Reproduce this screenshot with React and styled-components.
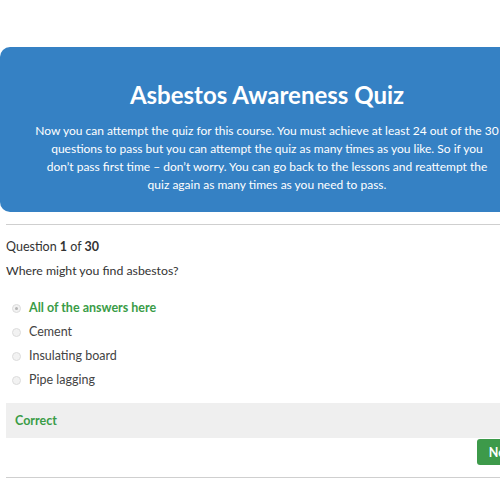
import React from "react";
import styled, { createGlobalStyle } from "styled-components";

const Global = createGlobalStyle`
  html, body { margin: 0; padding: 0; overflow: hidden; background: #fff; }
  body { font-family: Lato, "Open Sans", sans-serif; color: #333; }
`;

const Page = styled.div`
  width: 534px;
  padding-top: 47px;
`;

const Hero = styled.header`
  background: #3581c4;
  border-radius: 10px;
  color: #fff;
  text-align: center;
  padding: 34px 0 20px;
  height: 165px;
  box-sizing: border-box;
`;

const Title = styled.h1`
  margin: 0 0 13px;
  font-size: 24px;
  font-weight: 700;
  line-height: 28px;
`;

const Intro = styled.p`
  margin: 0;
  font-size: 12px;
  line-height: 18px;
  white-space: nowrap;
`;

const Content = styled.main`
  padding: 12px 6px 0 6px;
`;

const Rule = styled.hr`
  border: 0;
  border-top: 1px solid #cfcfcf;
  margin: 0;
`;

const Counter = styled.div`
  margin-top: 13px;
  font-size: 12.5px;
  line-height: 18px;
  b { font-weight: 700; }
`;

const Prompt = styled.div`
  margin-top: 6px;
  font-size: 12.3px;
  line-height: 18px;
`;

const Options = styled.ul`
  list-style: none;
  margin: 19px 0 0;
  padding: 0 0 0 6px;
  display: flex;
  flex-direction: column;
  gap: 6px;
`;

const Option = styled.li`
  display: flex;
  align-items: center;
  gap: 8px;
  font-size: 12.5px;
  line-height: 18px;
  color: ${(p) => (p.$correct ? "#3a9c47" : "#444")};
  font-weight: ${(p) => (p.$correct ? 700 : 400)};
`;

const Radio = styled.span`
  width: 7px;
  height: 7px;
  border-radius: 50%;
  border: 1px solid #dcdcdc;
  background: #f2f2f2;
  display: inline-flex;
  align-items: center;
  justify-content: center;
  flex: none;
  &::after {
    content: "";
    width: 3px;
    height: 3px;
    border-radius: 50%;
    background: ${(p) => (p.$checked ? "#b5b5b5" : "transparent")};
  }
`;

const Feedback = styled.div`
  margin-top: 14px;
  background: #efefef;
  height: 35px;
  display: flex;
  align-items: center;
  padding-left: 9px;
  font-size: 12.5px;
  font-weight: 700;
  color: #3a9c47;
`;

const Actions = styled.div`
  display: flex;
  justify-content: flex-end;
  padding-top: 1px;
  padding-bottom: 12px;
  border-bottom: 1px solid #cfcfcf;
`;

const NextButton = styled.button`
  background: #3d9a4a;
  color: #fff;
  border: 0;
  border-radius: 3px;
  height: 26px;
  padding: 0 12px;
  font-family: inherit;
  font-size: 12.5px;
  font-weight: 700;
`;

const answers = [
  { label: "All of the answers here", correct: true },
  { label: "Cement" },
  { label: "Insulating board" },
  { label: "Pipe lagging" },
];

export default function App() {
  return (
    <>
      <Global />
      <Page>
        <Hero>
          <Title>Asbestos Awareness Quiz</Title>
          <Intro>
            Now you can attempt the quiz for this course. You must achieve at least 24 out of the 30
            <br />
            questions to pass but you can attempt the quiz as many times as you like. So if you
            <br />
            don’t pass first time – don’t worry. You can go back to the lessons and reattempt the
            <br />
            quiz again as many times as you need to pass.
          </Intro>
        </Hero>
        <Content>
          <Rule />
          <Counter>
            Question <b>1</b> of <b>30</b>
          </Counter>
          <Prompt>Where might you find asbestos?</Prompt>
          <Options>
            {answers.map((a) => (
              <Option key={a.label} $correct={a.correct}>
                <Radio $checked={a.correct} />
                {a.label}
              </Option>
            ))}
          </Options>
          <Feedback>Correct</Feedback>
          <Actions>
            <NextButton>Next</NextButton>
          </Actions>
        </Content>
      </Page>
    </>
  );
}
